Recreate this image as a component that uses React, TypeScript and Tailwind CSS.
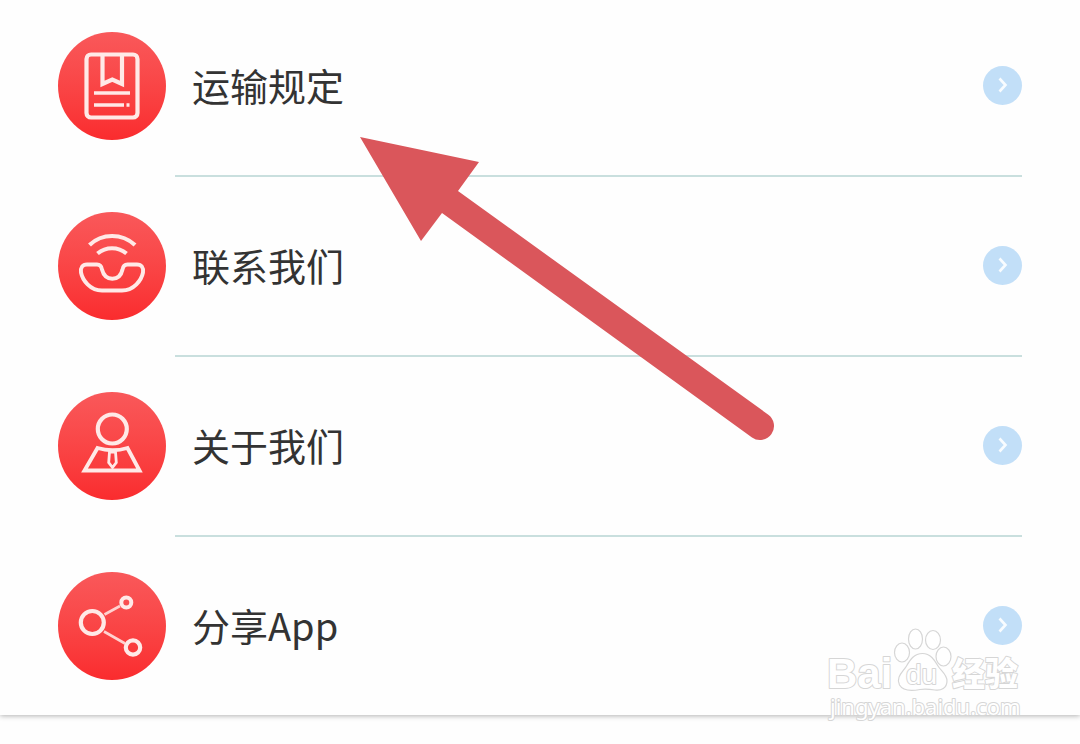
import type { ReactNode } from "react";

type Item = { label: string; href: string; icon: ReactNode };

const items: Item[] = [
  {
    label: "运输规定",
    href: "#rules",
    icon: (
      <>
        <rect x="28.500" y="22.500" width="51" height="63" rx="4.500" strokeWidth="4.200" />
        <path d="M44.500 24V52L54.300 47.500L64 52V24" strokeWidth="4.200" />
        <path d="M36 61H72" strokeWidth="3.600" />
        <path d="M36 73H66M68.500 73H71.500" strokeWidth="3.400" />
      </>
    ),
  },
  {
    label: "联系我们",
    href: "#contact",
    icon: (
      <>
        <path d="M31.500 33C44 21 64 21 77 33" strokeWidth="4.200" />
        <path d="M39.500 41.500C48 34.500 60 34.500 68.500 41.500" strokeWidth="4.200" />
        <path
          d="M29 52.500H39C42.500 52.500 43.500 54.500 44 57.500C45.500 63.500 49 66.700 54.300 66.700C60 66.700 63.200 63.500 64.500 57.500C65 54.500 66 52.500 69.500 52.500H79C83.500 52.500 85.700 55.500 85 60.500C83.500 68 76 78.500 64 78.500H44C32 78.500 24.500 68 23 60.500C22.300 55.500 24.500 52.500 29 52.500Z"
          strokeWidth="3.900"
        />
      </>
    ),
  },
  {
    label: "关于我们",
    href: "#about",
    icon: (
      <>
        <circle cx="54.300" cy="37" r="14.500" strokeWidth="4.200" />
        <path
          d="M39.500 56Q54.300 60.500 69.500 56L81.500 78.500H26.500L39.500 56Z"
          strokeWidth="3.900"
        />
        <path d="M51.500 60H57.500L58.300 70.500L54.500 75.500L50.700 70.500Z" strokeWidth="2.800" />
      </>
    ),
  },
  {
    label: "分享App",
    href: "#share",
    icon: (
      <>
        <circle cx="34.300" cy="50.500" r="11.500" strokeWidth="4.200" />
        <circle cx="68.300" cy="30.500" r="5" strokeWidth="4" />
        <circle cx="75" cy="75.500" r="7.200" strokeWidth="4.200" />
        <path d="M46.500 42.500L62 34M46 59.500L67 71.500" strokeWidth="2.600" stroke="#ffd2d0" />
      </>
    ),
  },
];

function Chevron() {
  return (
    <span className="flex size-[39px] shrink-0 items-center justify-center rounded-full bg-[#c2dff8]">
      <svg viewBox="0 0 18 18" className="size-[18px]" fill="none" stroke="#f8fcff" strokeWidth="2.600" aria-hidden="true">
        <path d="M5.500 2.500L11.500 9L5.500 15.500" />
      </svg>
    </span>
  );
}

function Row({ item, last }: { item: Item; last: boolean }) {
  return (
    <li>
      <a href={item.href} className="flex items-start gap-[9px]">
        <span className="size-[108px] shrink-0 rounded-full bg-linear-to-b from-[#f9585a] to-[#fa2b2e]">
          <svg viewBox="0 0 108 108" className="size-full" fill="none" stroke="#ffe9e7" aria-hidden="true">
            {item.icon}
          </svg>
        </span>
        <span className={last ? "flex-1" : "flex-1 border-b-2 border-[#c9dfde] pb-[37px]"}>
          <span className="flex h-[106px] items-center justify-between pl-[17px]">
            <span className="text-[38px] leading-[56px]">{item.label}</span>
            <Chevron />
          </span>
        </span>
      </a>
    </li>
  );
}

function Arrow() {
  return (
    <svg
      viewBox="0 0 416 305"
      className="pointer-events-none absolute top-[136px] left-[359px] w-[416px]"
      fill="#da565b"
      aria-hidden="true"
    >
      <path d="M1 1L120 26L99 55L409 278.500A14 14 0 0 1 393 301.500L83 77L62 105Z" />
    </svg>
  );
}

function Watermark() {
  return (
    <svg
      viewBox="0 0 200 100"
      className="pointer-events-none absolute top-[625px] right-[56px] w-[200px]"
      fill="#fff"
      stroke="#d6d6d6"
      strokeWidth="1.200"
      role="img"
      aria-label="Baidu 经验"
    >
      <ellipse cx="78" cy="27.500" rx="7.500" ry="9.500" />
      <ellipse cx="91.500" cy="14" rx="7" ry="10" />
      <ellipse cx="109" cy="15" rx="7.500" ry="9.500" />
      <ellipse cx="119.500" cy="31.500" rx="7.500" ry="9.500" />
      <path d="M98.500 28.500C107 28.500 111 36 114 41C117 46 123 49 123 56C123 63 117 66 111 65C105 64 101 63.500 96 64.500C88 66 79 66 75.500 60C71.500 52 79 47 82.500 41C86 35 90 28.500 98.500 28.500Z" />
      <g strokeWidth="2" strokeLinejoin="round" style={{ paintOrder: "stroke" }}>
        <text x="3" y="63" fontSize="42" fontWeight="700" fontFamily="Liberation Sans, sans-serif">
          Bai
        </text>
        <text x="82" y="59" fontSize="28" fontFamily="Liberation Sans, sans-serif">
          du
        </text>
        <text x="128" y="61" fontSize="33" fontWeight="900" fontFamily="Noto Sans CJK SC, sans-serif">
          经验
        </text>
        <text x="6" y="90" fontSize="22" fontFamily="Noto Sans, sans-serif">
          jingyan.baidu.com
        </text>
      </g>
    </svg>
  );
}

export default function App() {
  return (
    <div className="min-h-screen bg-[#fefefe] font-['Noto_Sans_CJK_SC',sans-serif] text-[#333]">
      <main className="relative bg-[#fefefe] px-[58px] pt-8 pb-[35px] shadow-[0_1px_5px_rgba(0,0,0,0.3)]">
        <ul className="flex flex-col gap-[35px]">
          {items.map((item, i) => (
            <Row key={item.href} item={item} last={i === items.length - 1} />
          ))}
        </ul>
        <Arrow />
        <Watermark />
      </main>
    </div>
  );
}
